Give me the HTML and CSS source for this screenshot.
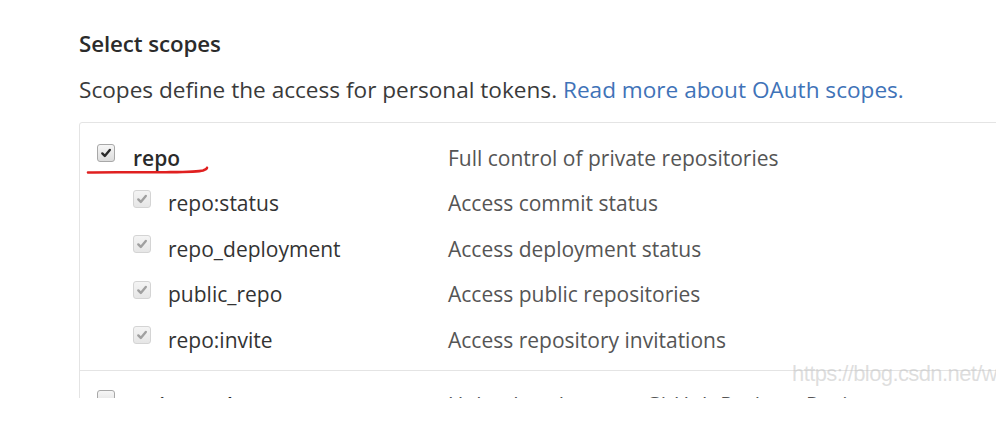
FILE: index.html
```html
<!DOCTYPE html>
<html>
<head>
<meta charset="utf-8">
<link rel="stylesheet" href="styles.css">
</head>
<body>
<div class="frame">
  <div class="page">
    <h2 class="title">Select scopes</h2>
    <p class="lead">Scopes define the access for personal tokens. <a class="link" href="#">Read more about OAuth scopes.</a></p>
    <div class="box">
      <div class="group">
        <div class="row top">
          <span class="cb on"><svg viewBox="0 0 12 12"><path d="M2.3 6.4 L4.8 8.9 L9.8 2.9" /></svg></span>
          <span class="name strong">repo</span>
          <span class="desc">Full control of private repositories</span>
        </div>
        <div class="row sub">
          <span class="cb dis"><svg viewBox="0 0 12 12"><path d="M2.3 6.4 L4.8 8.9 L9.8 2.9" /></svg></span>
          <span class="name">repo:status</span>
          <span class="desc">Access commit status</span>
        </div>
        <div class="row sub">
          <span class="cb dis"><svg viewBox="0 0 12 12"><path d="M2.3 6.4 L4.8 8.9 L9.8 2.9" /></svg></span>
          <span class="name">repo_deployment</span>
          <span class="desc">Access deployment status</span>
        </div>
        <div class="row sub">
          <span class="cb dis"><svg viewBox="0 0 12 12"><path d="M2.3 6.4 L4.8 8.9 L9.8 2.9" /></svg></span>
          <span class="name">public_repo</span>
          <span class="desc">Access public repositories</span>
        </div>
        <div class="row sub">
          <span class="cb dis"><svg viewBox="0 0 12 12"><path d="M2.3 6.4 L4.8 8.9 L9.8 2.9" /></svg></span>
          <span class="name">repo:invite</span>
          <span class="desc">Access repository invitations</span>
        </div>
      </div>
      <div class="group next">
        <div class="row top">
          <span class="cb"></span>
          <span class="name strong">write:packages</span>
          <span class="desc">Upload packages to GitHub Package Registry</span>
        </div>
      </div>
    </div>
    <svg class="mark" width="130" height="16" viewBox="0 0 130 16"><path d="M2 9.5 C 20 9, 50 9.5, 80 9.2 C 100 9, 112 9, 117 7.5 C 120 6.5, 121 5.5, 121 4.8" /></svg>
    <div class="watermark">https://blog.csdn.net/w</div>
  </div>
</div>
</body>
</html>
```

FILE: styles.css
```css
html, body {
  margin: 0;
  padding: 0;
  background: #ffffff;
}

.frame {
  width: 996px;
  height: 398px;
  overflow: hidden;
}

.page {
  position: relative;
  padding: 28px 0 0 79px;
  font-family: "Open Sans", "Noto Sans", sans-serif;
  color: #444;
}

.title {
  margin: 0;
  font-size: 22.3px;
  font-weight: 600;
  color: #2b2b2b;
  line-height: 32px;
  letter-spacing: -0.1px;
}

.lead {
  margin: 14px 0 0 0;
  font-size: 22.6px;
  line-height: 32px;
  color: #3a3a3a;
  white-space: nowrap;
}

.link {
  color: #3f73b8;
  text-decoration: none;
}

.box {
  margin-top: 16px;
  width: 1000px;
  border: 1px solid #e4e4e4;
  border-radius: 3px;
}

.group {
  padding: 12px 0 7px 0;
}

.group.next {
  padding-top: 12px;
}

.group + .group {
  border-top: 1px solid #e4e4e4;
}

.row {
  display: flex;
  align-items: center;
  height: 45.5px;
  font-size: 21px;
}

.row.top {
  padding-left: 17px;
}

.row.sub {
  padding-left: 53px;
}

.cb {
  box-sizing: border-box;
  width: 18px;
  height: 18px;
  margin-top: -9px;
  border: 1px solid #a8a8a8;
  border-radius: 3px;
  background: linear-gradient(#f6f6f6, #dcdcdc);
  display: flex;
  align-items: center;
  justify-content: center;
  flex: none;
}

.group.next .cb {
  margin-top: -12px;
}

.cb svg {
  width: 12px;
  height: 12px;
}

.cb svg path {
  fill: none;
  stroke: #2a2a2a;
  stroke-width: 2.4;
  stroke-linecap: round;
  stroke-linejoin: round;
}

.cb.dis {
  border-color: #d4d4d4;
  background: linear-gradient(#f4f4f4, #e6e6e6);
}

.cb.dis svg path {
  stroke: #a0a0a0;
}

.name {
  margin-left: 18px;
  flex: none;
  color: #333;
}

.row.top .name {
  width: 315px;
}

.row.sub .name {
  margin-left: 17px;
  width: 280px;
}

.name.strong {
  font-weight: 600;
  color: #2a2a2a;
}

.desc {
  color: #555;
  white-space: nowrap;
}

.mark {
  position: absolute;
  left: 86px;
  top: 163px;
  overflow: visible;
}

.mark path {
  fill: none;
  stroke: #e02020;
  stroke-width: 2.6;
  stroke-linecap: round;
}

.watermark {
  position: absolute;
  left: 792px;
  top: 361px;
  font-family: "Liberation Sans", Arial, sans-serif;
  font-size: 22px;
  color: rgba(190, 190, 190, 0.5);
  white-space: nowrap;
  letter-spacing: -0.6px;
}
```
